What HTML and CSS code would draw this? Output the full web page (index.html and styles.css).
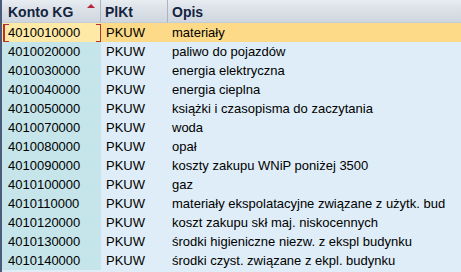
FILE: index.html
```html
<!DOCTYPE html>
<html>
<head>
<meta charset="utf-8">
<link rel="stylesheet" href="styles.css">
</head>
<body>
<div class="grid">
  <div class="hdr c1">Konto KG<span class="sort"></span></div>
  <div class="hdr c2">PlKt</div>
  <div class="hdr c3">Opis</div>

  <div class="cell c1 sel first"><span class="br-l"></span>4010010000<span class="br-r"></span></div>
  <div class="cell c2 sel">PKUW</div>
  <div class="cell c3 sel">materiały</div>

  <div class="cell c1">4010020000</div><div class="cell c2">PKUW</div><div class="cell c3">paliwo do pojazdów</div>
  <div class="cell c1">4010030000</div><div class="cell c2">PKUW</div><div class="cell c3">energia elektryczna</div>
  <div class="cell c1">4010040000</div><div class="cell c2">PKUW</div><div class="cell c3">energia cieplna</div>
  <div class="cell c1">4010050000</div><div class="cell c2">PKUW</div><div class="cell c3">książki i czasopisma do zaczytania</div>
  <div class="cell c1">4010070000</div><div class="cell c2">PKUW</div><div class="cell c3">woda</div>
  <div class="cell c1">4010080000</div><div class="cell c2">PKUW</div><div class="cell c3">opał</div>
  <div class="cell c1">4010090000</div><div class="cell c2">PKUW</div><div class="cell c3">koszty zakupu WNiP poniżej 3500</div>
  <div class="cell c1">4010100000</div><div class="cell c2">PKUW</div><div class="cell c3">gaz</div>
  <div class="cell c1">4010110000</div><div class="cell c2">PKUW</div><div class="cell c3">materiały ekspolatacyjne związane z użytk. bud</div>
  <div class="cell c1">4010120000</div><div class="cell c2">PKUW</div><div class="cell c3">koszt zakupu skł maj. niskocennych</div>
  <div class="cell c1">4010130000</div><div class="cell c2">PKUW</div><div class="cell c3">środki higieniczne niezw. z ekspl budynku</div>
  <div class="cell c1">4010140000</div><div class="cell c2">PKUW</div><div class="cell c3">środki czyst. związane z ekpl. budynku</div>
</div>
</body>
</html>
```
FILE: styles.css
```css
html, body {
  margin: 0;
  padding: 0;
  background: #deedf7;
  overflow: hidden;
}
.grid {
  display: grid;
  grid-template-columns: 99px 67px 1fr;
  grid-auto-rows: 19px;
  grid-template-rows: 23px;
  border-left: 2px solid #4b5b7a;
  font-family: "Liberation Sans", Arial, sans-serif;
  font-size: 13px;
  color: #000;
  height: 272px;
}
.hdr {
  position: relative;
  display: flex;
  align-items: center;
  font-weight: bold;
  font-size: 14px;
  color: #14233f;
  background: linear-gradient(#e8edf2 0%, #dfe4ea 30%, #cfd6df 100%);
  border-bottom: 1px solid #c4ccd6;
  box-sizing: border-box;
  padding-top: 1px;
}
.hdr.c1 { padding-left: 6px; border-right: 1px solid #a9b4c2; }
.hdr.c2 { padding-left: 4px; border-right: 1px solid #a9b4c2; }
.hdr.c3 { padding-left: 4px; }
.sort {
  position: absolute;
  right: 5px;
  top: 4px;
  width: 0;
  height: 0;
  border-left: 4px solid transparent;
  border-right: 4px solid transparent;
  border-bottom: 4px solid #b8233f;
}
.cell {
  display: flex;
  align-items: center;
  white-space: nowrap;
  overflow: hidden;
  box-sizing: border-box;
}
.cell.c1 { background: #c5e5ea; padding-left: 6px; }
.cell.c2 { padding-left: 5px; }
.cell.c3 { padding-left: 4px; }
.cell.sel { background: #fcda87; }
.cell.c1.sel { background: #fee9a6; }
.first { position: relative; }
.br-l, .br-r {
  position: absolute;
  top: 1px;
  bottom: 0;
  width: 4px;
  border-top: 1px solid #b8322e;
  border-bottom: 1px solid #b8322e;
}
.br-l { left: 1px; border-left: 2px solid #b8322e; }
.br-r { right: 0; border-right: 1px solid #b8322e; }
```
